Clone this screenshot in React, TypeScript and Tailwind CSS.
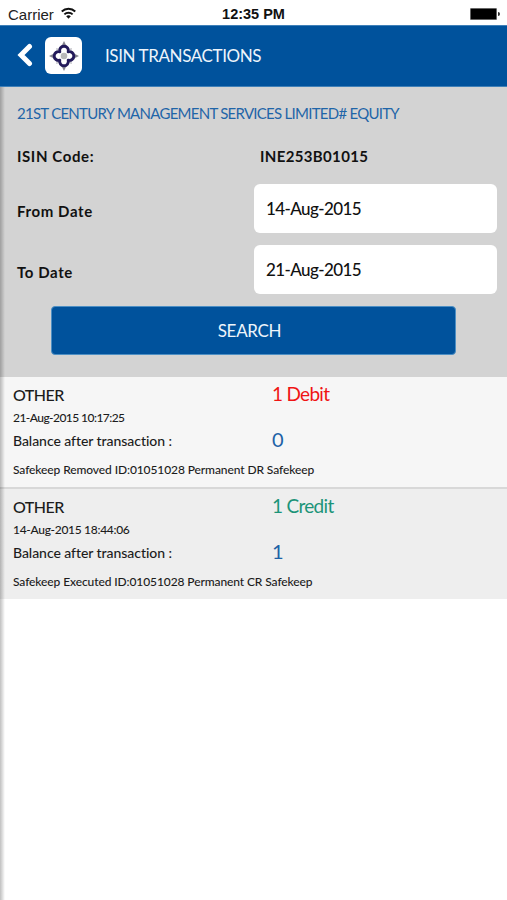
const transactions = [
  {
    type: 'OTHER',
    time: '21-Aug-2015 10:17:25',
    timeSpacing: 'tracking-[-0.55px]',
    amount: '1 Debit',
    amountColor: 'text-[#f01414]',
    balance: '0',
    note: 'Safekeep Removed ID:01051028 Permanent DR Safekeep',
    row: 'bg-[#f6f6f6] h-[112px] border-b-2 border-[#d8d8d8]',
  },
  {
    type: 'OTHER',
    time: '14-Aug-2015 18:44:06',
    timeSpacing: 'tracking-[-0.3px]',
    amount: '1 Credit',
    amountColor: 'text-[#1b9478]',
    balance: '1',
    note: 'Safekeep Executed ID:01051028 Permanent CR Safekeep',
    row: 'bg-[#eeeeee] h-[110px]',
  },
]

function StatusBar() {
  return (
    <div className="grid h-[25px] grid-cols-3 items-center bg-white pt-[3px] font-['Liberation_Sans',sans-serif] text-black">
      <div className="flex items-center gap-[7px] pl-2 text-[15px] leading-none text-[#222]">
        Carrier
        <svg viewBox="0 0 16 12" className="mb-[3px] h-[12px] w-[15px]" fill="none" stroke="#111" strokeWidth="2">
          <path d="M.8 4.400a10.200 10.200 0 0 1 14.400 0" />
          <path d="M3.600 7.500a6.200 6.200 0 0 1 8.800 0" />
          <path d="M8 12 5.500 9.500a3.600 3.600 0 0 1 5 0z" fill="#111" stroke="none" />
        </svg>
      </div>
      <div className="text-center text-[14.5px] leading-none font-bold text-[#111]">12:35 PM</div>
      <div className="flex items-center justify-end pr-[7px] pb-px">
        <div className="h-[12px] w-[27px] rounded-[1px] border border-[#666] bg-black" />
        <div className="ml-px h-1 w-[2px] rounded-r-full bg-[#333]" />
      </div>
    </div>
  )
}

function Logo() {
  return (
    <div className="flex h-[37px] w-[37px] items-center justify-center rounded-[6px] bg-white">
      <svg viewBox="0 0 32 32" className="h-[32px] w-[32px]">
        <path d="M16 1l2.500 5h-5zM16 31l2.500-5h-5zM1 16l5-2.500v5zM31 16l-5-2.500v5z" fill="#85858f" />
        <path d="M8 8l4 1-3 3zM24 8l-4 1 3 3zM8 24l4-1-3-3zM24 24l-4-1 3-3z" fill="#c3c3c9" />
        <path
          d="M11.800 11.800A4.380 4.380 0 1 1 20.200 11.800A4.380 4.380 0 1 1 20.200 20.200A4.380 4.380 0 1 1 11.800 20.200A4.380 4.380 0 1 1 11.800 11.800z"
          fill="none"
          stroke="#231a5a"
          strokeWidth="2.900"
          strokeLinejoin="round"
        />
        <circle cx="16" cy="16" r="3.300" fill="#b9b9b9" />
      </svg>
    </div>
  )
}

function Header() {
  return (
    <header className="flex h-[62px] items-center border-y border-[#3f80b8] bg-[#00529c] pl-[17px]">
      <svg
        viewBox="0 0 16 24"
        className="mb-[2px] h-[24px] w-[16px]"
        fill="none"
        stroke="#fff"
        strokeWidth="5"
        strokeLinecap="round"
      >
        <path d="M12.500 3.500 4 12l8.500 8.500" />
      </svg>
      <div className="ml-3 pb-px">
        <Logo />
      </div>
      <h1 className="ml-[23px] text-[17px] tracking-[-0.4px] text-[#eef5fb]">ISIN TRANSACTIONS</h1>
    </header>
  )
}

function DateField({ label, value }: { label: string; value: string }) {
  return (
    <div className="flex h-[49px] items-center">
      <span className="w-[237px] pt-[5px] text-[15px] font-bold tracking-[0.6px]">{label}</span>
      <div className="flex h-full w-[243px] items-center rounded-[6px] bg-white px-3 pt-px text-[17px] font-medium tracking-[-0.6px]">
        {value}
      </div>
    </div>
  )
}

function SearchForm() {
  return (
    <section className="flex h-[290px] flex-col bg-[#d3d3d3] pl-[17px] text-[#111]">
      <h2 className="mt-4 text-[15px] leading-5 tracking-[-0.73px] whitespace-nowrap text-[#1f65a8]">
        21ST CENTURY MANAGEMENT SERVICES LIMITED# EQUITY
      </h2>
      <div className="mt-[23px] mb-[18px] flex text-[15px] leading-5 font-bold">
        <span className="w-[243px] tracking-[0.6px]">ISIN Code:</span>
        <span className="tracking-[0.35px]">INE253B01015</span>
      </div>
      <div className="flex flex-col gap-3">
        <DateField label="From Date" value="14-Aug-2015" />
        <DateField label="To Date" value="21-Aug-2015" />
      </div>
      <button className="mt-[12px] ml-[34px] h-[49px] w-[405px] rounded-[4px] border border-[#4d8fc4] bg-[#00529c] pt-px pr-2 text-[17px] tracking-[-0.3px] text-[#eef5fb]">
        SEARCH
      </button>
    </section>
  )
}

function TransactionRow({ item }: { item: (typeof transactions)[number] }) {
  return (
    <li className={`${item.row} pt-[7px] pl-[13px] font-medium whitespace-nowrap text-[#1c1c1c]`}>
      <div className="flex h-[22px] items-center">
        <span className="w-[259px] text-[16px] tracking-[-0.5px]">{item.type}</span>
        <span className={`pb-[3px] text-[19px] leading-5 font-normal tracking-[-0.7px] ${item.amountColor}`}>
          {item.amount}
        </span>
      </div>
      <div className={`flex h-6 items-center text-[12px] ${item.timeSpacing}`}>{item.time}</div>
      <div className="flex h-[21px] items-center">
        <span className="w-[259px] text-[14px] tracking-[-0.05px]">Balance after transaction :</span>
        <span className="pb-[3px] text-[20px] leading-5 font-normal text-[#1d62a6]">{item.balance}</span>
      </div>
      <div className="mt-2 flex h-5 items-center pt-px text-[12px] tracking-[-0.1px]">{item.note}</div>
    </li>
  )
}

export default function App() {
  return (
    <div className="relative h-[900px] w-[507px] overflow-hidden bg-white font-[Lato,'Open_Sans',sans-serif]">
      <StatusBar />
      <Header />
      <SearchForm />
      <ul>
        {transactions.map((item) => (
          <TransactionRow key={item.time} item={item} />
        ))}
      </ul>
      <div className="absolute top-[87px] bottom-0 left-0 w-[5px] bg-gradient-to-r from-black/25 to-transparent" />
    </div>
  )
}
